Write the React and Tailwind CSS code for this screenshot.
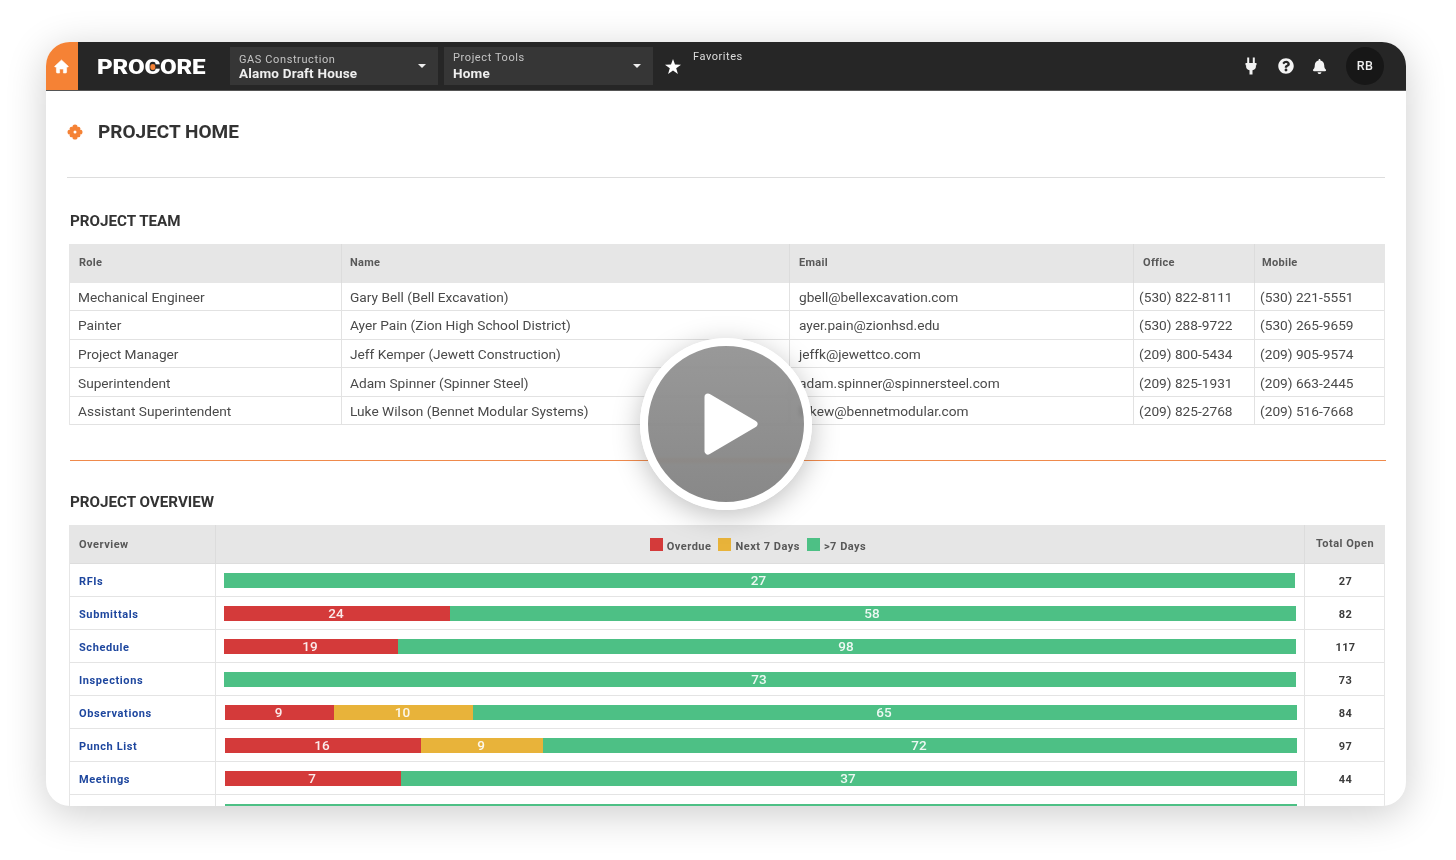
import React from "react";
import { FaQuestionCircle, FaBell } from "react-icons/fa";

const team = [
  ["Mechanical Engineer", "Gary Bell (Bell Excavation)", "gbell@bellexcavation.com", "(530) 822-8111", "(530) 221-5551"],
  ["Painter", "Ayer Pain (Zion High School District)", "ayer.pain@zionhsd.edu", "(530) 288-9722", "(530) 265-9659"],
  ["Project Manager", "Jeff Kemper (Jewett Construction)", "jeffk@jewettco.com", "(209) 800-5434", "(209) 905-9574"],
  ["Superintendent", "Adam Spinner (Spinner Steel)", "adam.spinner@spinnersteel.com", "(209) 825-1931", "(209) 663-2445"],
  ["Assistant Superintendent", "Luke Wilson (Bennet Modular Systems)", "lukew@bennetmodular.com", "(209) 825-2768", "(209) 516-7668"],
];

const R = "bg-[#d43a3a]";
const Y = "bg-[#e8b33a]";
const G = "bg-[#4dc085]";

const overview = [
  { name: "RFIs", total: "27", left: 9, segs: [[1071, G, "27"]] },
  { name: "Submittals", total: "82", left: 9, segs: [[226, R, "24"], [846, G, "58"]] },
  { name: "Schedule", total: "117", left: 9, segs: [[174, R, "19"], [898, G, "98"]] },
  { name: "Inspections", total: "73", left: 9, segs: [[1072, G, "73"]] },
  { name: "Observations", total: "84", left: 10, segs: [[109, R, "9"], [139, Y, "10"], [824, G, "65"]] },
  { name: "Punch List", total: "97", left: 10, segs: [[196, R, "16"], [122, Y, "9"], [754, G, "72"]] },
  { name: "Meetings", total: "44", left: 10, segs: [[176, R, "7"], [896, G, "37"]] },
  { name: "", total: "", left: 10, segs: [[1072, G, ""]] },
];

function Selector({ top, bottom, width, gap }) {
  return (
    <div className={`${width} h-[38px] bg-[#363636] flex items-center justify-between pl-[9px] pr-[12px]`}>
      <div className="flex flex-col pt-[1px]">
        <span className={`${gap} text-[11px] leading-[13px] tracking-[0.6px] text-[#c4c4c4]`}>{top}</span>
        <span className="text-[13.5px] leading-[15px] font-bold tracking-[0.2px] text-[#efefef]">{bottom}</span>
      </div>
      <span className="w-0 h-0 border-l-[4px] border-r-[4px] border-t-[4px] border-l-transparent border-r-transparent border-t-[#eeeeee]" />
    </div>
  );
}

function Logo() {
  return (
    <div className="ml-[19px] mr-[23px] mt-[3px] w-[110px] text-white font-black text-[19.5px] leading-none tracking-[-0.2px] origin-left scale-x-[1.24] font-['Roboto',sans-serif] flex">
      <span>PRO</span>
      <span className="relative">
        C
        <span className="absolute left-[5px] top-[6px] w-[4px] h-[6px] rounded-full bg-[#f58235]" />
      </span>
      <span>ORE</span>
    </div>
  );
}

function HomeIcon() {
  return (
    <svg width="15" height="15" viewBox="0 0 15 15" fill="#ffffff">
      <path
        d="M7.5 1 L14.2 7.2 Q14.6 8 13.8 8 H12.6 V13 Q12.6 14 11.6 14 H9.4 V10 H5.6 V14 H3.4 Q2.4 14 2.4 13 V8 H1.2 Q0.4 8 0.8 7.2 Z"
        stroke="#ffffff"
        strokeWidth="0.6"
        strokeLinejoin="round"
      />
    </svg>
  );
}

function Star() {
  return (
    <svg width="16" height="15" viewBox="0 0 16 15" fill="#ffffff">
      <polygon points="8,0 10,5.5 16,5.7 11.2,9.3 12.9,15 8,11.6 3.1,15 4.8,9.3 0,5.7 6,5.5" />
    </svg>
  );
}

function Flower() {
  const angles = [0, 45, 90, 135, 180, 225, 270, 315];
  return (
    <svg width="16" height="16" viewBox="0 0 16 16" fill="#f58235">
      <circle cx="8" cy="8" r="4.6" />
      {angles.map((a) => (
        <circle
          key={a}
          cx={8 + 4.9 * Math.cos((a * Math.PI) / 180)}
          cy={8 + 4.9 * Math.sin((a * Math.PI) / 180)}
          r={a % 90 === 0 ? 2.6 : 1.9}
        />
      ))}
      <circle cx="8" cy="8" r="1.5" fill="#ffffff" />
    </svg>
  );
}

function Plug() {
  return (
    <svg width="12" height="18" viewBox="0 0 12 18" fill="#f2f2f2">
      <rect x="2.2" y="0.5" width="2" height="5.5" />
      <rect x="7.8" y="0.5" width="2" height="5.5" />
      <path d="M0.5 6h11v2.2h-0.6v1.6c0 1.9-1.4 3.2-3.4 3.5V17.5h-3V13.3C2.5 13 1.1 11.7 1.1 9.8V8.2H0.5z" />
    </svg>
  );
}

function App() {
  return (
    <div className="w-[1456px] h-[860px] overflow-hidden bg-white pt-[42px] pl-[46px] font-['Roboto',sans-serif]">
      <div className="relative w-[1360px] h-[764px] rounded-[24px] overflow-hidden bg-white shadow-[0_8px_40px_rgba(0,0,0,0.2)]">
        <header className="h-[49px] bg-[#262626] flex items-center border-b border-[#555555] blur-[0.4px]">
          <div className="w-[32px] h-full bg-[#f58235] flex items-center justify-center pr-[2px]">
            <HomeIcon />
          </div>
          <Logo />
          <div className="flex gap-[6px]">
            <Selector top="GAS Construction" bottom="Alamo Draft House" width="w-[208px]" gap="mb-0" />
            <Selector top="Project Tools" bottom="Home" width="w-[209px]" gap="mb-[2px] -mt-[2px]" />
          </div>
          <div className="ml-[12px] w-[16px] flex"><Star /></div>
          <span className="ml-[12px] mb-[18px] text-[11px] tracking-[0.55px] text-[#dddddd]">Favorites</span>
          <div className="ml-auto mr-[22px] flex items-center text-[#f4f4f4]">
            <span className="w-[12px] mr-[21px] flex"><Plug /></span>
            <span className="mr-[18px] flex"><FaQuestionCircle size={16} /></span>
            <span className="mr-[19px] flex"><FaBell size={15} /></span>
            <span className="w-[38px] h-[38px] rounded-full bg-[#171717] flex items-center justify-center text-[12.5px] font-medium tracking-[0.4px] text-[#eeeeee]">RB</span>
          </div>
        </header>

        <main className="px-[21px] blur-[0.4px]">
          <div className="pt-[27px] h-[54px] flex items-center gap-[15px]">
            <Flower />
            <h1 className="text-[19px] leading-[27px] font-bold text-[#333333]">PROJECT HOME</h1>
          </div>
          <div className="mt-[32px] h-px bg-[#dddddd]" />

          <h2 className="mt-[33px] ml-[3px] text-[15.2px] leading-[20px] font-bold text-[#333333]">PROJECT TEAM</h2>
          <div className="mt-[13px] ml-[2px] border-r border-l border-[#e6e6e6]">
            <div className="grid grid-cols-[271px_448px_344px_121px_130px] h-[39px] bg-[#e6e6e6] items-center text-[11px] font-bold tracking-[0.3px] text-[#585858]">
              <div className="pl-[9px] h-full flex items-center">Role</div>
              <div className="pl-[8px] h-full flex items-center border-l border-[#dcdcdc]">Name</div>
              <div className="pl-[9px] h-full flex items-center border-l border-[#dcdcdc]">Email</div>
              <div className="pl-[9px] h-full flex items-center border-l border-[#dcdcdc]">Office</div>
              <div className="pl-[7px] h-full flex items-center border-l border-[#dcdcdc]">Mobile</div>
            </div>
            {team.map((row, i) => {
              const shift = i >= 3 ? "pt-[3px]" : "pt-[1px]";
              return (
                <div key={row[0]} className="grid grid-cols-[271px_448px_344px_121px_130px] h-[28.4px] border-b border-[#e2e2e2] items-center text-[13.7px] text-[#4a4a4a]">
                  <div className={`${shift} pl-[8px] h-full flex items-center`}>{row[0]}</div>
                  <div className={`${shift} pl-[8px] h-full flex items-center border-l border-[#e2e2e2]`}>{row[1]}</div>
                  <div className={`${shift} pl-[9px] h-full flex items-center border-l border-[#e2e2e2]`}>{row[2]}</div>
                  <div className={`${shift} pl-[5px] h-full flex items-center border-l border-[#e2e2e2]`}>{row[3]}</div>
                  <div className={`${shift} pl-[5px] h-full flex items-center border-l border-[#e2e2e2]`}>{row[4]}</div>
                </div>
              );
            })}
          </div>

          <div className="mt-[35px] ml-[3px] -mr-px h-px bg-[#ef8a4c]" />

          <h2 className="mt-[31px] ml-[3px] text-[15.2px] leading-[20px] font-bold text-[#333333]">PROJECT OVERVIEW</h2>
          <div className="mt-[13px] ml-[2px] border-r border-l border-[#e6e6e6]">
            <div className="grid grid-cols-[145px_1089px_80px] h-[39px] bg-[#e6e6e6] text-[11px] font-bold tracking-[0.5px] text-[#585858] border-b border-[#dddddd]">
              <div className="pl-[9px] pt-[2px] flex items-center">Overview</div>
              <div className="border-l border-[#dcdcdc] flex items-center justify-center gap-[7px] pt-[7px] pr-[4px]">
                <span className="flex items-center gap-[4px]"><i className="w-[13px] h-[13px] mb-[6px] bg-[#d43a3a]" />Overdue</span>
                <span className="flex items-center gap-[4px]"><i className="w-[13px] h-[13px] mb-[6px] bg-[#e8b33a]" />Next 7 Days</span>
                <span className="flex items-center gap-[4px]"><i className="w-[13px] h-[13px] mb-[6px] bg-[#4dc085]" />&gt;7 Days</span>
              </div>
              <div className="border-l border-[#dcdcdc] pl-[1px] flex items-center justify-center">Total Open</div>
            </div>
            {overview.map((row, i) => (
              <div key={i} className="grid grid-cols-[145px_1089px_80px] h-[33px] border-b border-[#e4e4e4]">
                <div className="pl-[9px] pt-[5px] flex items-center text-[11px] font-bold tracking-[0.6px] text-[#1d469e]">{row.name}</div>
                <div className="border-l border-[#e4e4e4] pt-[1px] flex items-center" style={{ paddingLeft: row.left - 1 }}>
                  {row.segs.map(([w, color, label], j) => (
                    <div key={j} className={`${color} h-[15px] pr-[2px] flex items-center justify-center text-[13.5px] font-medium text-white/90`} style={{ width: w }}>
                      {label}
                    </div>
                  ))}
                </div>
                <div className="border-l border-[#e4e4e4] pt-[5px] pl-[2px] flex items-center justify-center text-[11px] font-bold tracking-[0.4px] text-[#3c3c3c]">{row.total}</div>
              </div>
            ))}
          </div>
        </main>

        <div className="absolute left-[594px] top-[296px] w-[172px] h-[172px] rounded-full border-[8px] border-white bg-[linear-gradient(180deg,rgba(130,130,130,0.82),rgba(110,110,110,0.82))] backdrop-blur-[2px] shadow-[0_6px_28px_rgba(0,0,0,0.25)] flex items-center justify-center">
          <svg width="54" height="62" viewBox="0 0 54 62" className="ml-[10px]">
            <path d="M4 4 L50 31 L4 58 Z" fill="#ffffff" stroke="#ffffff" strokeWidth="7" strokeLinejoin="round" />
          </svg>
        </div>
      </div>
    </div>
  );
}

export default App;
